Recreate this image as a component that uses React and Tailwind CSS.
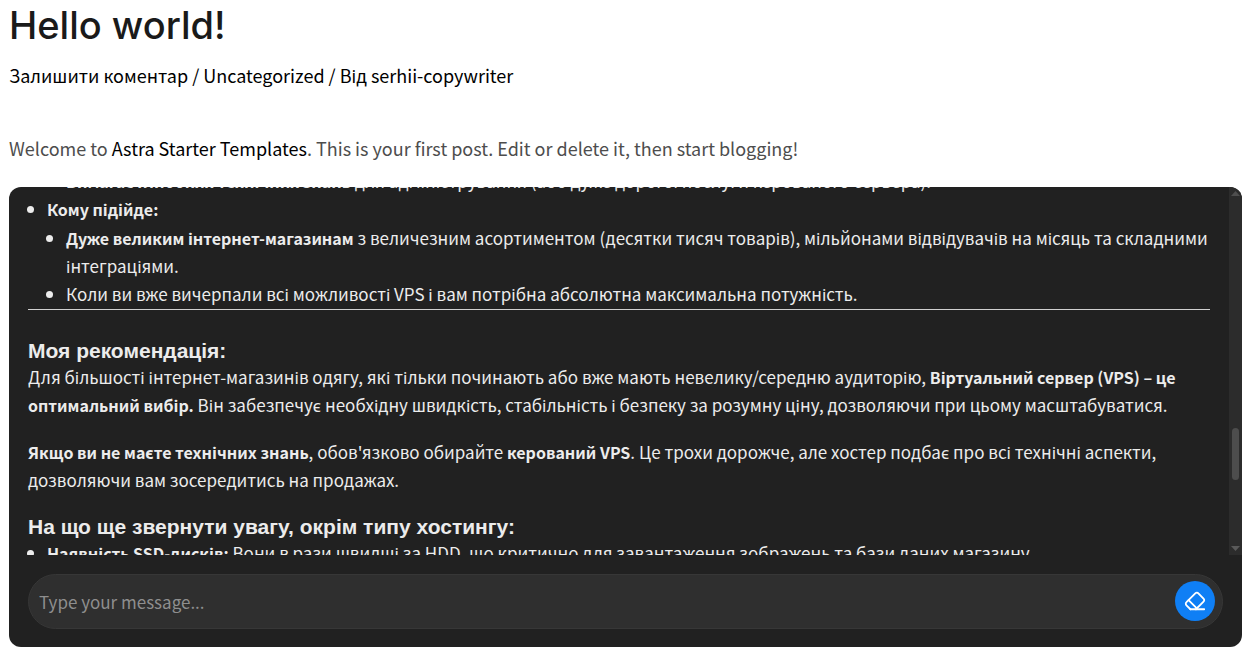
import { useState } from "react";

const Strong = ({ children }) => <strong className="text-[16px] font-bold">{children}</strong>;

const EraserIcon = () => (
  <svg
    className="w-[22px] h-[22px]"
    viewBox="0 0 24 24"
    fill="none"
    stroke="currentColor"
    strokeWidth="2"
    strokeLinecap="round"
    strokeLinejoin="round"
    aria-hidden="true"
  >
    <path d="m7 21-4.3-4.3c-1-1-1-2.5 0-3.4l9.6-9.6c1-1 2.5-1 3.4 0l5.6 5.6c1 1 1 2.5 0 3.4L13 21" />
    <path d="M22 21H7" />
    <path d="m5 11 9 9" />
  </svg>
);

const ScrollTrack = () => (
  <div className="w-[13px] shrink-0 bg-[#2c2c2c] flex flex-col items-center justify-between py-1" aria-hidden="true">
    <svg className="w-[9px] h-[5px]" viewBox="0 0 9 5">
      <path d="M0 5 4.5 0 9 5z" fill="#4f4f4f" />
    </svg>
    <div className="flex-1 flex flex-col items-center">
      <div className="grow-[229]" />
      <div className="w-[7px] h-[52px] rounded-full bg-[#4d4d4d]" />
      <div className="grow-[65]" />
    </div>
    <svg className="w-[9px] h-[5px]" viewBox="0 0 9 5">
      <path d="M0 0 4.5 5 9 0z" fill="#5a5a5a" />
    </svg>
  </div>
);

const ChatHeading = ({ children }) => (
  <h3 className="font-['Liberation_Sans',sans-serif] text-[21px] leading-[25px] font-bold">{children}</h3>
);

const Messages = () => (
  <div className="flex-1 min-w-0 overflow-hidden px-[19px] text-[17px] leading-7 text-[#ececec]">
    <ul className="list-disc pl-[19px] -mt-5">
      <li className="list-none">
        <ul className="list-disc pl-[19px]">
          <li>
            <Strong>Вимагає глибоких технічних знань</Strong> для адміністрування (або дуже дорогої послуги керованого
            сервера).
          </li>
        </ul>
      </li>
      <li>
        <Strong>Кому підійде:</Strong>
        <ul className="list-disc pl-[19px] py-px">
          <li>
            <Strong>Дуже великим інтернет-магазинам</Strong> з величезним асортиментом (десятки тисяч товарів),
            мільйонами відвідувачів на місяць та складними інтеграціями.
          </li>
          <li>Коли ви вже вичерпали всі можливості VPS і вам потрібна абсолютна максимальна потужність.</li>
        </ul>
      </li>
    </ul>
    <hr className="border-t border-[#d0d0d0] mb-7" />
    <ChatHeading>Моя рекомендація:</ChatHeading>
    <p className="mb-[19px]">
      Для більшості інтернет-магазинів одягу, які тільки починають або вже мають невелику/середню аудиторію,{" "}
      <Strong>Віртуальний сервер (VPS) – це оптимальний вибір.</Strong> Він забезпечує необхідну швидкість, стабільність
      і безпеку за розумну ціну, дозволяючи при цьому масштабуватися.
    </p>
    <p className="mb-5">
      <Strong>Якщо ви не маєте технічних знань</Strong>, обов'язково обирайте <Strong>керований VPS</Strong>. Це трохи
      дорожче, але хостер подбає про всі технічні аспекти, дозволяючи вам зосередитись на продажах.
    </p>
    <ChatHeading>На що ще звернути увагу, окрім типу хостингу:</ChatHeading>
    <ul className="list-disc pl-[19px]">
      <li>
        <Strong>Наявність SSD-дисків:</Strong> Вони в рази швидші за HDD, що критично для завантаження зображень та бази
        даних магазину.
      </li>
    </ul>
  </div>
);

const ChatBox = () => {
  const [message, setMessage] = useState("");

  return (
    <section className="bg-[#212121] rounded-xl overflow-hidden">
      <div className="h-[368px] flex">
        <Messages />
        <ScrollTrack />
      </div>
      <form
        className="mx-[19px] mt-[19px] mb-[18px] flex items-center rounded-full border border-[#373737] bg-[#2f2f2f] pt-[6px] pb-[7px] pl-[10px] pr-[7px]"
        onSubmit={(e) => e.preventDefault()}
      >
        <input
          type="text"
          aria-label="Message"
          placeholder="Type your message..."
          value={message}
          onChange={(e) => setMessage(e.target.value)}
          className="flex-1 min-w-0 h-10 bg-transparent text-[17px] text-[#ececec] placeholder-[#8e8e8e] outline-none"
        />
        <button
          type="button"
          aria-label="Clear chat"
          onClick={() => setMessage("")}
          className="w-10 h-10 shrink-0 rounded-full bg-[#0f7ff5] text-white flex items-center justify-center"
        >
          <EraserIcon />
        </button>
      </form>
    </section>
  );
};

const App = () => {
  return (
    <main className="pl-[9px] pr-[5px] pb-2 bg-white font-['Noto_Sans_CJK_SC','Noto_Sans',sans-serif]">
      <h1 className="font-['Inter',sans-serif] text-[38px] leading-[50px] font-medium text-[#1a1a1a]">Hello world!</h1>
      <div className="mt-[11px] text-[18px] leading-7 text-black">
        <a href="#respond">Залишити коментар</a> / <a href="#uncategorized">Uncategorized</a> / Від{" "}
        <a href="#author">serhii-copywriter</a>
      </div>
      <p className="mt-[45px] mb-[25px] text-[18px] leading-7 text-[#4d4d4d]">
        Welcome to{" "}
        <a href="#templates" className="text-black">
          Astra Starter Templates
        </a>
        . This is your first post. Edit or delete it, then start blogging!
      </p>
      <ChatBox />
    </main>
  );
};

export default App;
